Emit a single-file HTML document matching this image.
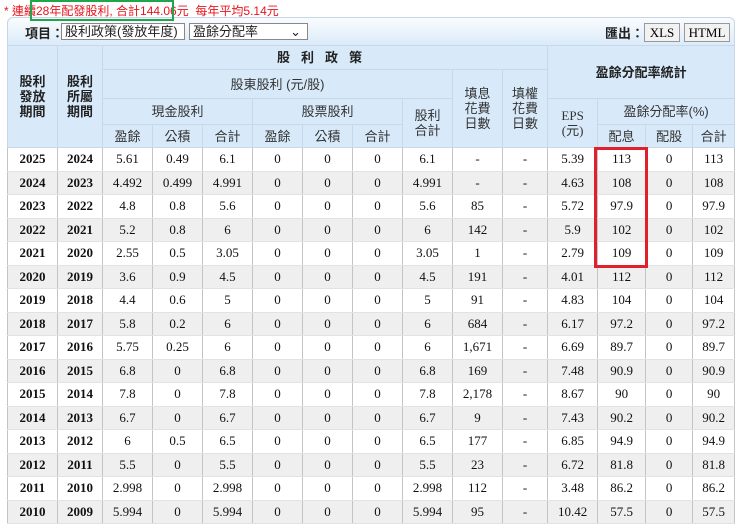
<!DOCTYPE html><html><head><meta charset="utf-8"><style>
body{margin:0;background:#fff;width:740px;height:525px;overflow:hidden;font-family:"Liberation Serif","Noto Serif CJK SC",serif;position:relative}
.top{position:absolute;left:4px;top:2px;font:12px "Liberation Sans","Noto Sans CJK TC",sans-serif;color:#e8141e;white-space:nowrap}
.gbox{position:absolute;left:30px;top:0px;width:140px;height:17px;border:2px solid #1fa64a;z-index:5}
.bar{position:absolute;left:7px;top:17px;width:726px;height:28px;border:1px solid #c8d6e4;border-bottom:none;border-radius:6px 6px 0 0;background:linear-gradient(#fafcfe,#d9eaf9)}
.bar .l{position:absolute;left:17px;top:5px;font:bold 13px "Liberation Sans","Noto Sans CJK TC",sans-serif;color:#222}
.sel{position:absolute;top:5px;height:17px;border:1px solid #888;background:#fff;font:13px "Liberation Sans","Noto Sans CJK TC",sans-serif;line-height:16px;padding-left:3px;box-sizing:border-box;color:#222}
.btn{position:absolute;top:5px;height:19px;border:1px solid #999;background:#f2f2f2;font:13px "Liberation Serif",serif;line-height:18px;text-align:center;box-sizing:border-box}
table{position:absolute;left:7px;top:45px;border-collapse:collapse;table-layout:fixed;width:727px;font-size:13px}
td,th{padding:0;text-align:center;border:1px solid #c8d8e8;overflow:hidden;white-space:nowrap}
th{background:#d8eaf9;font-weight:normal;color:#333;font-family:"Liberation Sans","Noto Sans CJK TC",sans-serif;font-size:13px;line-height:15px}
th.b{font-weight:bold;color:#222}
tbody td{height:22.5px;border-color:#e2e2e2 #c4c4c4;color:#111}
tbody td:nth-child(1),tbody td:nth-child(2){font-weight:bold}
tbody tr:nth-child(even) td{background:#efefef}
.red{position:absolute;left:594px;top:147px;width:48px;height:115px;border:3px solid #e0202c}
</style></head><body>
<div class="top">* 連續28年配發股利, 合計144.06元 &nbsp;每年平均5.14元</div>
<div class="gbox"></div>
<div class="bar"><span class="l">項目：</span>
<div class="sel" style="left:53px;width:124px">股利政策(發放年度) ⌄</div>
<div class="sel" style="left:181px;width:119px">盈餘分配率 <span style="float:right;margin-right:6px">⌄</span></div>
<span class="l" style="left:597px">匯出：</span>
<div class="btn" style="left:636px;width:36px">XLS</div>
<div class="btn" style="left:676px;width:46px">HTML</div></div>
<table><colgroup><col style="width:50px"><col style="width:45px"><col style="width:50px"><col style="width:50px"><col style="width:50px"><col style="width:50px"><col style="width:50px"><col style="width:50px"><col style="width:50px"><col style="width:50px"><col style="width:45px"><col style="width:50px"><col style="width:48px"><col style="width:47px"><col style="width:42px"></colgroup>
<thead>
<tr style="height:24px"><th rowspan="4" class="b">股利<br>發放<br>期間</th><th rowspan="4" class="b">股利<br>所屬<br>期間</th><th colspan="9" class="b" style="letter-spacing:11px">股利政策</th><th colspan="4" rowspan="2" class="b">盈餘分配率統計</th></tr>
<tr style="height:29px"><th colspan="7">股東股利 (元/股)</th><th rowspan="3">填息<br>花費<br>日數</th><th rowspan="3">填權<br>花費<br>日數</th></tr>
<tr style="height:26px"><th colspan="3">現金股利</th><th colspan="3">股票股利</th><th rowspan="2">股利<br>合計</th><th rowspan="2" style="font-family:'Liberation Serif',serif">EPS<br>(元)</th><th colspan="3">盈餘分配率(%)</th></tr>
<tr style="height:23px"><th>盈餘</th><th>公積</th><th>合計</th><th>盈餘</th><th>公積</th><th>合計</th><th>配息</th><th>配股</th><th>合計</th></tr>
</thead><tbody>
<tr><td>2025</td><td>2024</td><td>5.61</td><td>0.49</td><td>6.1</td><td>0</td><td>0</td><td>0</td><td>6.1</td><td>-</td><td>-</td><td>5.39</td><td>113</td><td>0</td><td>113</td></tr>
<tr><td>2024</td><td>2023</td><td>4.492</td><td>0.499</td><td>4.991</td><td>0</td><td>0</td><td>0</td><td>4.991</td><td>-</td><td>-</td><td>4.63</td><td>108</td><td>0</td><td>108</td></tr>
<tr><td>2023</td><td>2022</td><td>4.8</td><td>0.8</td><td>5.6</td><td>0</td><td>0</td><td>0</td><td>5.6</td><td>85</td><td>-</td><td>5.72</td><td>97.9</td><td>0</td><td>97.9</td></tr>
<tr><td>2022</td><td>2021</td><td>5.2</td><td>0.8</td><td>6</td><td>0</td><td>0</td><td>0</td><td>6</td><td>142</td><td>-</td><td>5.9</td><td>102</td><td>0</td><td>102</td></tr>
<tr><td>2021</td><td>2020</td><td>2.55</td><td>0.5</td><td>3.05</td><td>0</td><td>0</td><td>0</td><td>3.05</td><td>1</td><td>-</td><td>2.79</td><td>109</td><td>0</td><td>109</td></tr>
<tr><td>2020</td><td>2019</td><td>3.6</td><td>0.9</td><td>4.5</td><td>0</td><td>0</td><td>0</td><td>4.5</td><td>191</td><td>-</td><td>4.01</td><td>112</td><td>0</td><td>112</td></tr>
<tr><td>2019</td><td>2018</td><td>4.4</td><td>0.6</td><td>5</td><td>0</td><td>0</td><td>0</td><td>5</td><td>91</td><td>-</td><td>4.83</td><td>104</td><td>0</td><td>104</td></tr>
<tr><td>2018</td><td>2017</td><td>5.8</td><td>0.2</td><td>6</td><td>0</td><td>0</td><td>0</td><td>6</td><td>684</td><td>-</td><td>6.17</td><td>97.2</td><td>0</td><td>97.2</td></tr>
<tr><td>2017</td><td>2016</td><td>5.75</td><td>0.25</td><td>6</td><td>0</td><td>0</td><td>0</td><td>6</td><td>1,671</td><td>-</td><td>6.69</td><td>89.7</td><td>0</td><td>89.7</td></tr>
<tr><td>2016</td><td>2015</td><td>6.8</td><td>0</td><td>6.8</td><td>0</td><td>0</td><td>0</td><td>6.8</td><td>169</td><td>-</td><td>7.48</td><td>90.9</td><td>0</td><td>90.9</td></tr>
<tr><td>2015</td><td>2014</td><td>7.8</td><td>0</td><td>7.8</td><td>0</td><td>0</td><td>0</td><td>7.8</td><td>2,178</td><td>-</td><td>8.67</td><td>90</td><td>0</td><td>90</td></tr>
<tr><td>2014</td><td>2013</td><td>6.7</td><td>0</td><td>6.7</td><td>0</td><td>0</td><td>0</td><td>6.7</td><td>9</td><td>-</td><td>7.43</td><td>90.2</td><td>0</td><td>90.2</td></tr>
<tr><td>2013</td><td>2012</td><td>6</td><td>0.5</td><td>6.5</td><td>0</td><td>0</td><td>0</td><td>6.5</td><td>177</td><td>-</td><td>6.85</td><td>94.9</td><td>0</td><td>94.9</td></tr>
<tr><td>2012</td><td>2011</td><td>5.5</td><td>0</td><td>5.5</td><td>0</td><td>0</td><td>0</td><td>5.5</td><td>23</td><td>-</td><td>6.72</td><td>81.8</td><td>0</td><td>81.8</td></tr>
<tr><td>2011</td><td>2010</td><td>2.998</td><td>0</td><td>2.998</td><td>0</td><td>0</td><td>0</td><td>2.998</td><td>112</td><td>-</td><td>3.48</td><td>86.2</td><td>0</td><td>86.2</td></tr>
<tr><td>2010</td><td>2009</td><td>5.994</td><td>0</td><td>5.994</td><td>0</td><td>0</td><td>0</td><td>5.994</td><td>95</td><td>-</td><td>10.42</td><td>57.5</td><td>0</td><td>57.5</td></tr>
</tbody></table>
<div class="red"></div>
</body></html>
